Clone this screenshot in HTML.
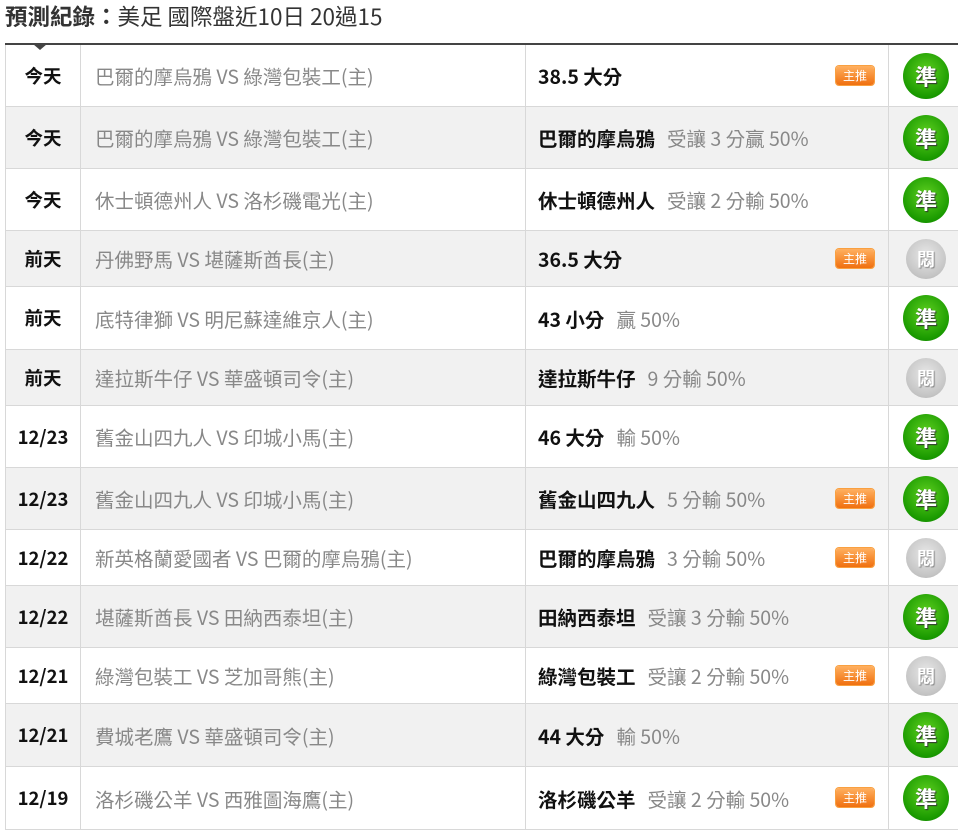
<!DOCTYPE html>
<html><head><meta charset="utf-8"><style>
body{margin:0;width:958px;height:820px;overflow:hidden;background:#fff;font-family:"Noto Sans CJK TC","Liberation Sans",sans-serif;}
h1{margin:0;position:absolute;left:5px;top:0px;font-size:22.5px;line-height:32px;font-weight:normal;color:#333;}
h1 b{font-weight:bold;}
.tbl{position:absolute;left:5px;top:43px;width:960px;border-top:2px solid #444;}
.r{position:relative;border-bottom:1px solid #d8d8d8;display:flex;align-items:center;font-size:19.5px;}
.r.g{background:#f1f1f1;}
.c{box-sizing:border-box;height:100%;display:flex;align-items:center;border-left:1px solid #d8d8d8;flex:none;white-space:nowrap;}
.d{width:75px;justify-content:center;font-weight:bold;color:#111;font-size:18.5px;}
.m{width:445px;padding-left:14px;color:#888;}
.p{width:363px;padding-left:12px;color:#888;position:relative;}
.p b{color:#111;margin-right:12px;}
.x{width:80px;padding-left:14px;border-right:none;}
.bd{position:absolute;left:310px;top:50%;margin-top:-10px;width:38px;height:19px;border-radius:3px;background:linear-gradient(#ffb060,#f07010);color:#fff;font-size:12px;line-height:19px;text-align:center;box-shadow:0 0 0 1px #f9a040;}
.ok{width:46px;height:46px;border-radius:50%;background:radial-gradient(circle at 50% 40%,#5fd020,#1a9a00 70%,#0c7a00);color:#fff;font-weight:bold;font-size:22px;display:flex;align-items:center;justify-content:center;text-shadow:1px 1px 1px #333;}
.no{width:40px;height:40px;margin-left:3px;border-radius:50%;background:radial-gradient(circle at 50% 40%,#e8e8e8,#c4c4c4 70%,#a8a8a8);color:#fff;font-weight:bold;font-size:18px;display:flex;align-items:center;justify-content:center;text-shadow:1px 1px 1px #888;}
.arrow{position:absolute;left:33px;top:44px;width:0;height:0;border-left:7px solid transparent;border-right:7px solid transparent;border-top:6px solid #444;}
</style></head><body>
<h1><b>預測紀錄：</b>美足 國際盤近10日 20過15</h1>
<div class="arrow"></div>
<div class="tbl">
<div class="r" style="height:61px"><div class="c d">今天</div><div class="c m">巴爾的摩烏鴉 VS 綠灣包裝工(主)</div><div class="c p"><b>38.5 大分</b><span class="bd">主推</span></div><div class="c x"><div class="ok">準</div></div></div>
<div class="r g" style="height:61px"><div class="c d">今天</div><div class="c m">巴爾的摩烏鴉 VS 綠灣包裝工(主)</div><div class="c p"><b>巴爾的摩烏鴉</b>受讓 3 分贏 50%</div><div class="c x"><div class="ok">準</div></div></div>
<div class="r" style="height:61px"><div class="c d">今天</div><div class="c m">休士頓德州人 VS 洛杉磯電光(主)</div><div class="c p"><b>休士頓德州人</b>受讓 2 分輸 50%</div><div class="c x"><div class="ok">準</div></div></div>
<div class="r g" style="height:55px"><div class="c d">前天</div><div class="c m">丹佛野馬 VS 堪薩斯酋長(主)</div><div class="c p"><b>36.5 大分</b><span class="bd">主推</span></div><div class="c x"><div class="no">悶</div></div></div>
<div class="r" style="height:62px"><div class="c d">前天</div><div class="c m">底特律獅 VS 明尼蘇達維京人(主)</div><div class="c p"><b>43 小分</b>贏 50%</div><div class="c x"><div class="ok">準</div></div></div>
<div class="r g" style="height:55px"><div class="c d">前天</div><div class="c m">達拉斯牛仔 VS 華盛頓司令(主)</div><div class="c p"><b>達拉斯牛仔</b>9 分輸 50%</div><div class="c x"><div class="no">悶</div></div></div>
<div class="r" style="height:61px"><div class="c d">12/23</div><div class="c m">舊金山四九人 VS 印城小馬(主)</div><div class="c p"><b>46 大分</b>輸 50%</div><div class="c x"><div class="ok">準</div></div></div>
<div class="r g" style="height:61px"><div class="c d">12/23</div><div class="c m">舊金山四九人 VS 印城小馬(主)</div><div class="c p"><b>舊金山四九人</b>5 分輸 50%<span class="bd">主推</span></div><div class="c x"><div class="ok">準</div></div></div>
<div class="r" style="height:55px"><div class="c d">12/22</div><div class="c m">新英格蘭愛國者 VS 巴爾的摩烏鴉(主)</div><div class="c p"><b>巴爾的摩烏鴉</b>3 分輸 50%<span class="bd">主推</span></div><div class="c x"><div class="no">悶</div></div></div>
<div class="r g" style="height:61px"><div class="c d">12/22</div><div class="c m">堪薩斯酋長 VS 田納西泰坦(主)</div><div class="c p"><b>田納西泰坦</b>受讓 3 分輸 50%</div><div class="c x"><div class="ok">準</div></div></div>
<div class="r" style="height:55px"><div class="c d">12/21</div><div class="c m">綠灣包裝工 VS 芝加哥熊(主)</div><div class="c p"><b>綠灣包裝工</b>受讓 2 分輸 50%<span class="bd">主推</span></div><div class="c x"><div class="no">悶</div></div></div>
<div class="r g" style="height:62px"><div class="c d">12/21</div><div class="c m">費城老鷹 VS 華盛頓司令(主)</div><div class="c p"><b>44 大分</b>輸 50%</div><div class="c x"><div class="ok">準</div></div></div>
<div class="r" style="height:62px"><div class="c d">12/19</div><div class="c m">洛杉磯公羊 VS 西雅圖海鷹(主)</div><div class="c p"><b>洛杉磯公羊</b>受讓 2 分輸 50%<span class="bd">主推</span></div><div class="c x"><div class="ok">準</div></div></div>
</div>
</body></html>
